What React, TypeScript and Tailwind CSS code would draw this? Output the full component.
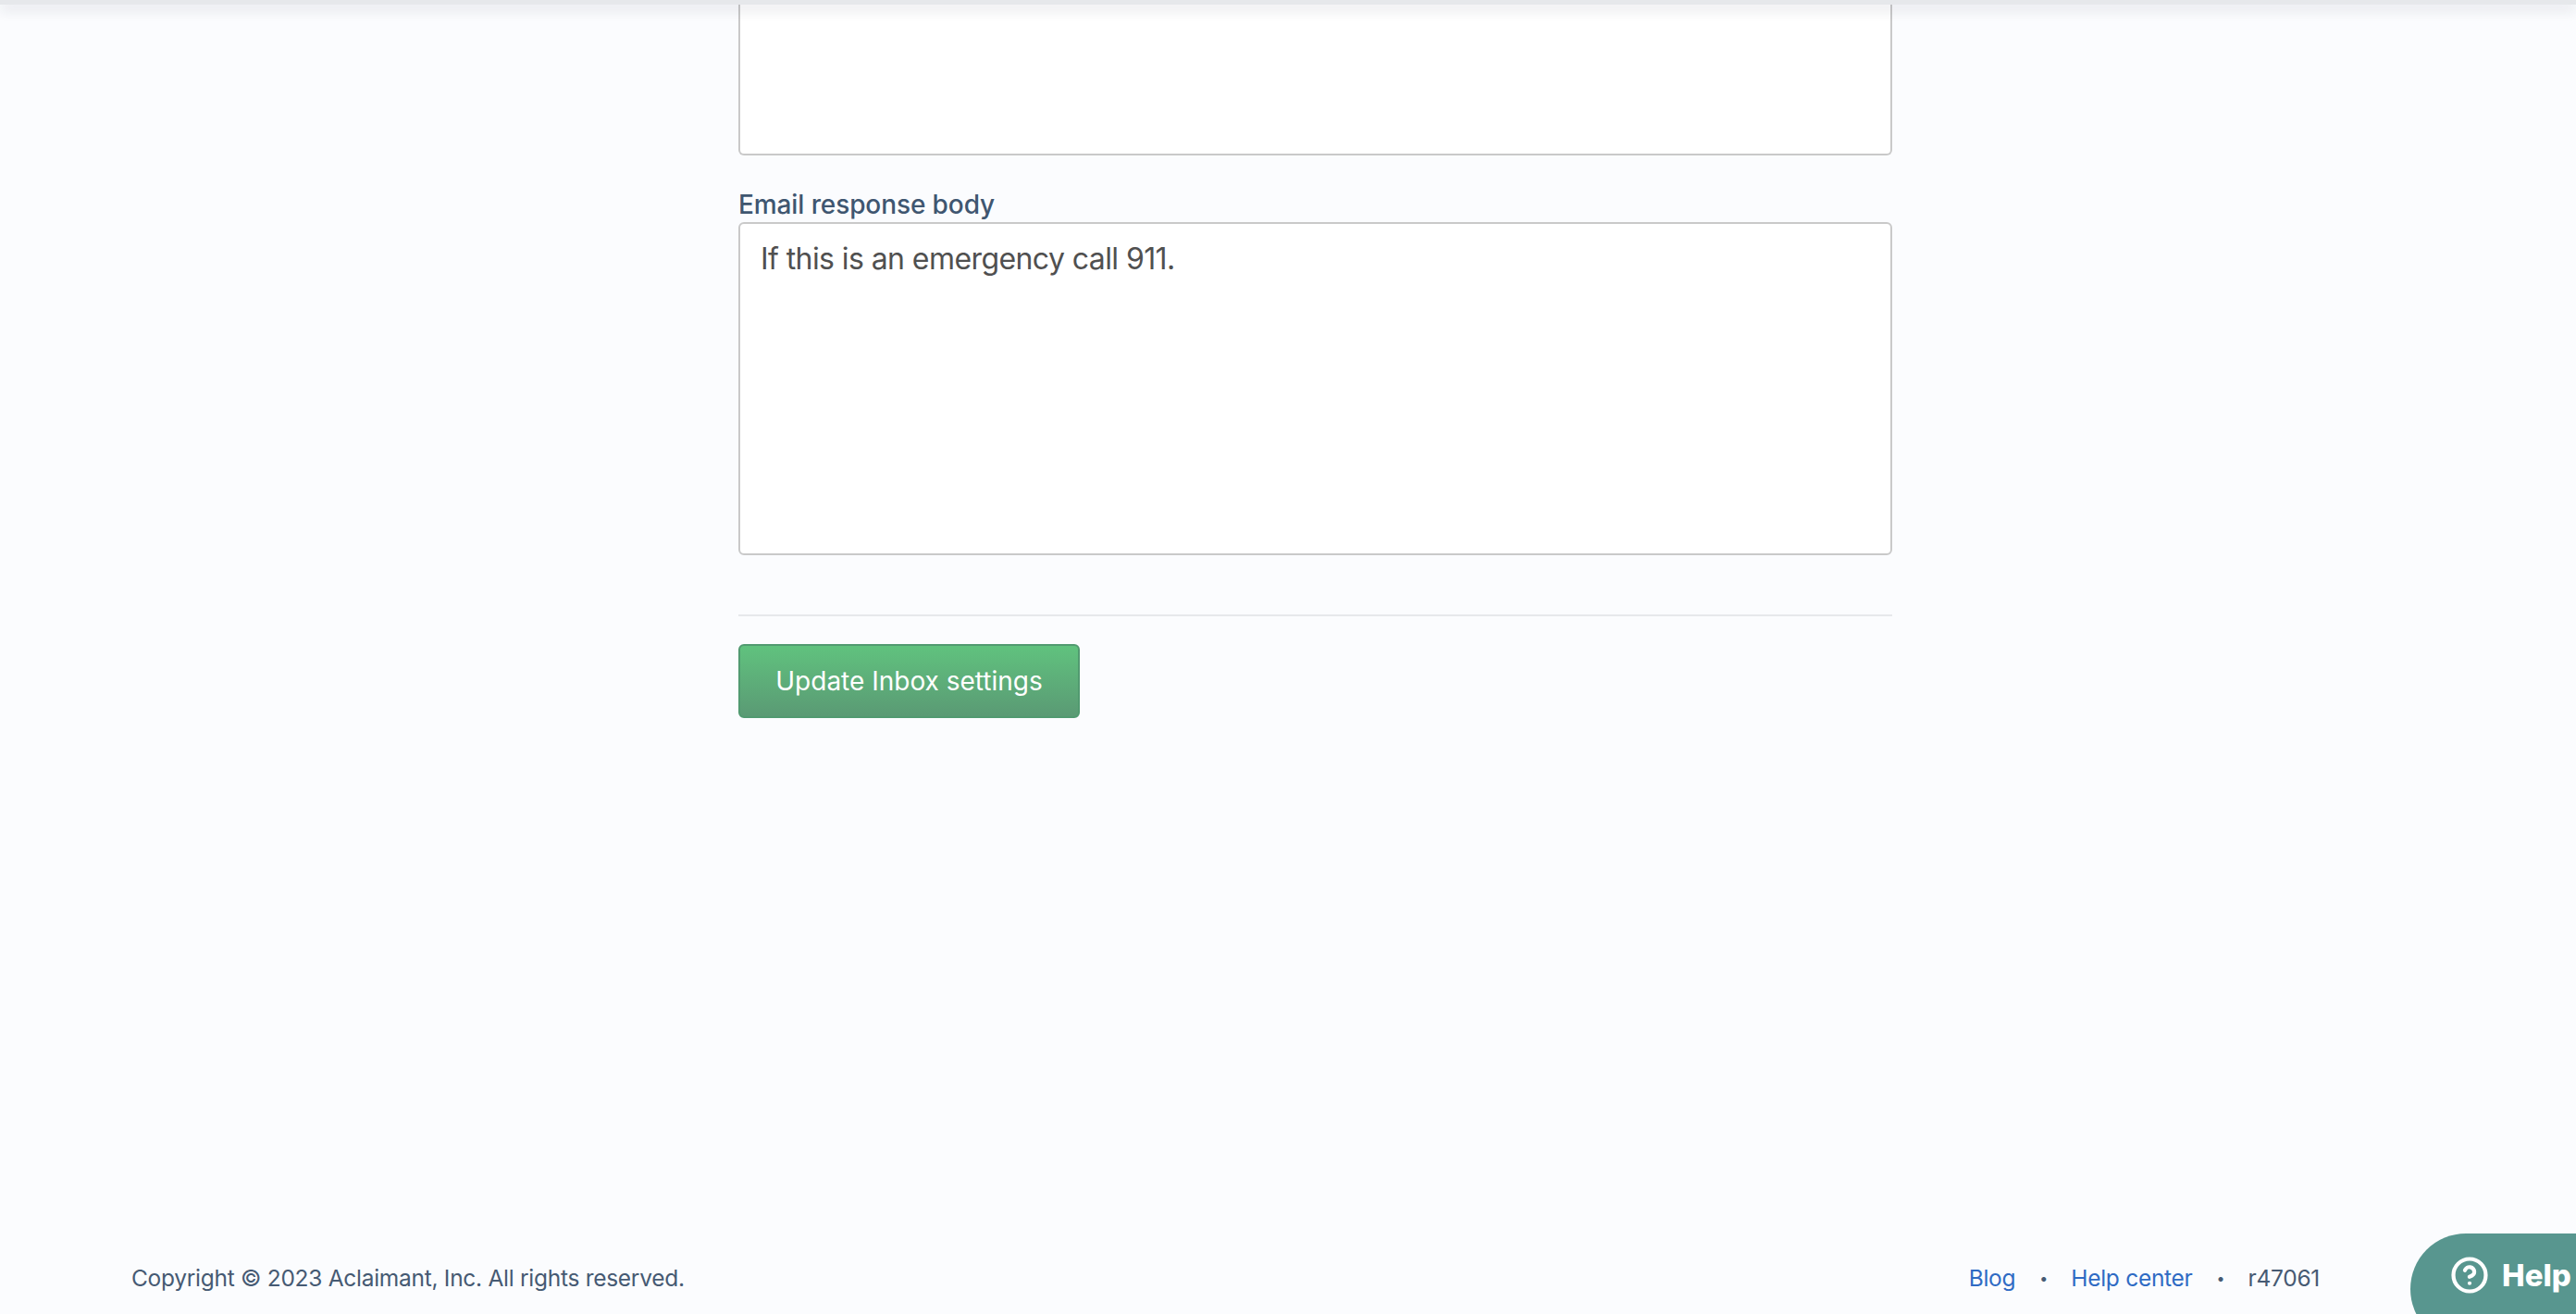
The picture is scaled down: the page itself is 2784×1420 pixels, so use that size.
import { CircleHelp } from "lucide-react";

const font = { fontFamily: "Inter, 'Liberation Sans', sans-serif" };

export default function App() {
  return (
    <div
      style={font}
      className="relative flex h-[1420px] w-full flex-col overflow-hidden bg-[#fbfcfe] font-['Inter',sans-serif] antialiased"
    >
      {/* shadow of the fixed header above the viewport */}
      <div className="absolute inset-x-0 top-0 z-10 h-[5px] bg-[#e6e8eb] shadow-[0_5px_14px_rgba(30,40,60,0.18)]" />

      <main className="ml-[798px] flex w-[1247px] flex-col">
        <div className="h-[168px] rounded-b-[6px] border-x-2 border-b-2 border-[#c9c9c9] bg-white" />

        <label className="mt-[36px] mb-[2px] block text-[28px] leading-[34px] font-medium tracking-[-0.1px] text-[#3f5670]">
          Email response body
        </label>
        <textarea
          readOnly
          value="If this is an emergency call 911."
          className="h-[360px] w-full resize-none rounded-[6px] border-2 border-[#c9c9c9] bg-white px-[22px] py-[16px] text-[32px] leading-[44px] tracking-[-0.58px] text-[#505050] outline-none"
        />

        <hr className="mt-[64px] border-0 border-t-2 border-[#e6e8eb]" />

        <button className="mt-[30px] h-[80px] w-[369px] rounded-[6px] border-2 border-[#519a70] bg-gradient-to-b from-[#60c27e] to-[#5a9a74] text-[28px] text-white">
          Update Inbox settings
        </button>
      </main>

      <footer className="mt-auto flex items-center justify-between pr-[277px] pb-[23px] pl-[142px] text-[24.5px] leading-[32px] tracking-[-0.28px] text-[#465a73]">
        <span>Copyright © 2023 Aclaimant, Inc. All rights reserved.</span>
        <div className="flex items-center gap-[26px]">
          <a className="text-[#2f6bc4]">Blog</a>
          <span className="w-[8px] text-center text-[16px]">•</span>
          <a className="text-[#2f6bc4]">Help center</a>
          <span className="w-[8px] text-center text-[16px]">•</span>
          <span>r47061</span>
        </div>
      </footer>

      <div className="absolute top-[1333px] left-[2605px] flex h-[120px] w-[260px] items-start gap-[14px] rounded-[60px] bg-[#58968f] pt-[24px] pl-[43px] text-[33px] leading-[42px] font-extrabold text-white">
        <CircleHelp size={42} strokeWidth={2.4} />
        <span>Help</span>
      </div>
    </div>
  );
}
